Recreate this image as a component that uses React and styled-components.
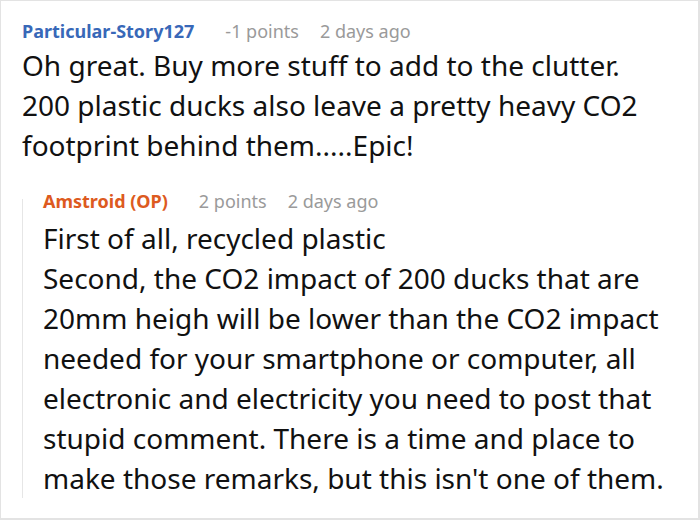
import React from "react";
import styled, { createGlobalStyle } from "styled-components";

const GlobalStyle = createGlobalStyle`
  html, body {
    margin: 0;
    padding: 0;
    background: #fff;
  }
  body {
    font-family: "Noto Sans", "Open Sans", sans-serif;
  }
`;

const Page = styled.div`
  box-sizing: border-box;
  width: 700px;
  height: 520px;
  border: 1px solid #e3e3e3;
  border-right-width: 2px;
  border-bottom-width: 2px;
  padding: 18px 0 0 21px;
  overflow: hidden;
`;

const Comment = styled.div`
  display: flex;
  flex-direction: column;
`;

const Header = styled.div`
  display: flex;
  align-items: center;
  gap: 31px;
  height: 24px;
  font-size: 18px;
  line-height: 24px;
`;

const Author = styled.span`
  font-weight: 700;
  color: ${(p) => (p.op ? "#dd5a20" : "#3868b8")};
`;

const Meta = styled.div`
  display: flex;
  gap: 21px;
  color: #9a9a9a;
`;

const Body = styled.div`
  margin-top: ${(p) => p.gap}px;
  font-size: 28px;
  line-height: 40px;
  color: #111;
`;

const Reply = styled.div`
  margin-top: 24px;
  padding-left: 21px;
  background: linear-gradient(#e6e6e6, #e6e6e6) no-repeat 0 10px / 1px
    calc(100% - 8px);
`;

const comments = {
  parent: {
    author: "Particular-Story127",
    points: "-1 points",
    age: "2 days ago",
    lines: [
      "Oh great. Buy more stuff to add to the clutter.",
      "200 plastic ducks also leave a pretty heavy CO2",
      "footprint behind them.....Epic!",
    ],
  },
  reply: {
    author: "Amstroid (OP)",
    points: "2 points",
    age: "2 days ago",
    lines: [
      "First of all, recycled plastic",
      "Second, the CO2 impact of 200 ducks that are",
      "20mm heigh will be lower than the CO2 impact",
      "needed for your smartphone or computer, all",
      "electronic and electricity you need to post that",
      "stupid comment. There is a time and place to",
      "make those remarks, but this isn't one of them.",
    ],
  },
};

function CommentBlock({ data, op, gap }) {
  return (
    <Comment>
      <Header>
        <Author op={op}>{data.author}</Author>
        <Meta>
          <span>{data.points}</span>
          <span>{data.age}</span>
        </Meta>
      </Header>
      <Body gap={gap}>
        {data.lines.map((l, i) => (
          <div key={i}>{l}</div>
        ))}
      </Body>
    </Comment>
  );
}

export default function App() {
  return (
    <>
      <GlobalStyle />
      <Page>
        <CommentBlock data={comments.parent} gap={2} />
        <Reply>
          <CommentBlock data={comments.reply} op gap={5} />
        </Reply>
      </Page>
    </>
  );
}
